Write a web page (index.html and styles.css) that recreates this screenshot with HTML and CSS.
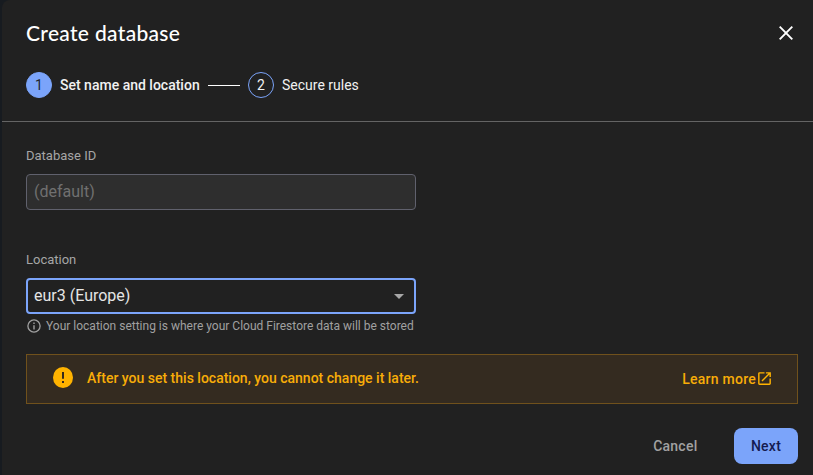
FILE: index.html
```html
<!DOCTYPE html>
<html lang="en">
<head>
<meta charset="utf-8">
<title>Create database</title>
<link rel="stylesheet" href="styles.css">
</head>
<body>
<main class="dialog">
  <header class="header">
    <div class="title-row">
      <h1 class="title">Create database</h1>
      <button class="close" aria-label="Close"><svg width="14" height="14" viewBox="0 0 14 14"><path d="M.7.7l12.6 12.6M13.3.7L.7 13.3" fill="none" stroke="#fff" stroke-width="1.9"/></svg></button>
    </div>
    <div class="stepper">
      <span class="badge active">1</span>
      <span class="step current">Set name and location</span>
      <span class="line"></span>
      <span class="badge">2</span>
      <span class="step">Secure rules</span>
    </div>
  </header>
  <section class="content">
    <label class="label">Database ID</label>
    <div class="field disabled"><span>(default)</span></div>
    <label class="label location">Location</label>
    <div class="field select"><span class="value">eur3 (Europe)</span><svg width="10" height="5" viewBox="0 0 10 5"><path d="M0 0h10L5 5z" fill="#a7a7a7"/></svg></div>
    <div class="hint">
      <svg width="14" height="14" viewBox="0 0 14 14"><circle cx="7" cy="7" r="6.1" fill="none" stroke="#a0a0a0" stroke-width="1.3"/><path d="M6.3 3.5h1.4v1.4H6.3zM6.3 6.2h1.4v4.2H6.3z" fill="#a0a0a0"/></svg>
      <span>Your location setting is where your Cloud Firestore data will be stored</span>
    </div>
    <div class="warning">
      <svg class="alert" width="20" height="21" viewBox="0 0 20 21" preserveAspectRatio="none"><ellipse cx="10" cy="10.5" rx="10" ry="10.5" fill="#ffb300"/><path d="M9 5h2v6.7H9zM9 14h2v2H9z" fill="#34291d"/></svg>
      <span class="message">After you set this location, you cannot change it later.</span>
      <a class="learn">Learn more<svg width="17" height="17" viewBox="0 0 24 24"><path d="M19 19H5V5h7V3H5a2 2 0 0 0-2 2v14a2 2 0 0 0 2 2h14c1.100 0 2-.9 2-2v-7h-2v7zM14 3v2h3.590l-9.830 9.830 1.410 1.410L19 6.410V10h2V3h-7z" fill="#ffb300"/></svg></a>
    </div>
  </section>
  <footer class="actions">
    <button class="cancel">Cancel</button>
    <button class="next">Next</button>
  </footer>
</main>
</body>
</html>
```
FILE: styles.css
```css
* { box-sizing: border-box; }
body { margin: 0; background: #171b20; font-family: Roboto, sans-serif; color: #f1f1f1; overflow: hidden; }
button { border: 0; padding: 0; background: none; font: inherit; }
svg { display: block; flex: none; }
.dialog { height: 475px; margin-left: 2px; background: #212121; border-top-left-radius: 8px; }
.header { height: 122px; padding: 20px 20px 0 24px; border-bottom: 1px solid #646464; }
.title-row { display: flex; justify-content: space-between; height: 28px; }
.title { margin: 0; font: 500 21px/26px Lato, sans-serif; letter-spacing: .32px; color: #fff; }
.close { width: 14px; height: 14px; margin-top: 6px; }
.stepper { display: flex; align-items: center; height: 26px; margin-top: 24px; font-size: 14px; }
.badge { width: 26px; height: 26px; border: 1px solid #7ba4fa; border-radius: 50%; text-align: center; line-height: 25px; }
.badge.active { background: #7ba4fa; color: #20252f; }
.step { margin-left: 8px; white-space: nowrap; }
.current { font-weight: 500; width: 140px; }
.line { width: 32px; height: 1px; background: #fff; margin: 1px 8px 0; }
.content { padding: 26px 15px 0 24px; }
.label { display: block; font-size: 13px; line-height: 16px; color: #a6a6a6; }
.location { margin-top: 42px; }
.field { display: flex; align-items: center; justify-content: space-between; width: 390px; height: 36px; margin-top: 10px; border-radius: 4px; font-size: 16px; }
.disabled { padding: 0 7px 2px; background: #2e2e2e; border: 1px solid #60616d; color: #707070; }
.select { padding: 0 10px 0 6px; border: 2px solid #7ba4fa; color: #e5e5e5; }
.value { padding-bottom: 2px; }
.hint { display: flex; align-items: center; gap: 5px; height: 14px; margin: 5px 0 0 1px; font-size: 12px; color: #a0a0a0; white-space: nowrap; }
.warning { display: flex; align-items: center; height: 50px; margin-top: 21px; padding: 0 24px 3px 26px; background: #342b20; border: 1px solid #70511c; color: #f8ad08; font-size: 14px; font-weight: 500; }
.message { margin-left: 14px; }
.learn { display: flex; align-items: center; margin-left: auto; padding-top: 2px; letter-spacing: .25px; }
.actions { display: flex; justify-content: flex-end; gap: 36.5px; padding: 24px 15px 0 0; font-size: 14px; font-weight: 500; }
.cancel { color: #a1a1a1; letter-spacing: .25px; }
.next { width: 64px; height: 36px; border-radius: 8px; background: #7ba4fa; color: #151b50; letter-spacing: .25px; }
```
